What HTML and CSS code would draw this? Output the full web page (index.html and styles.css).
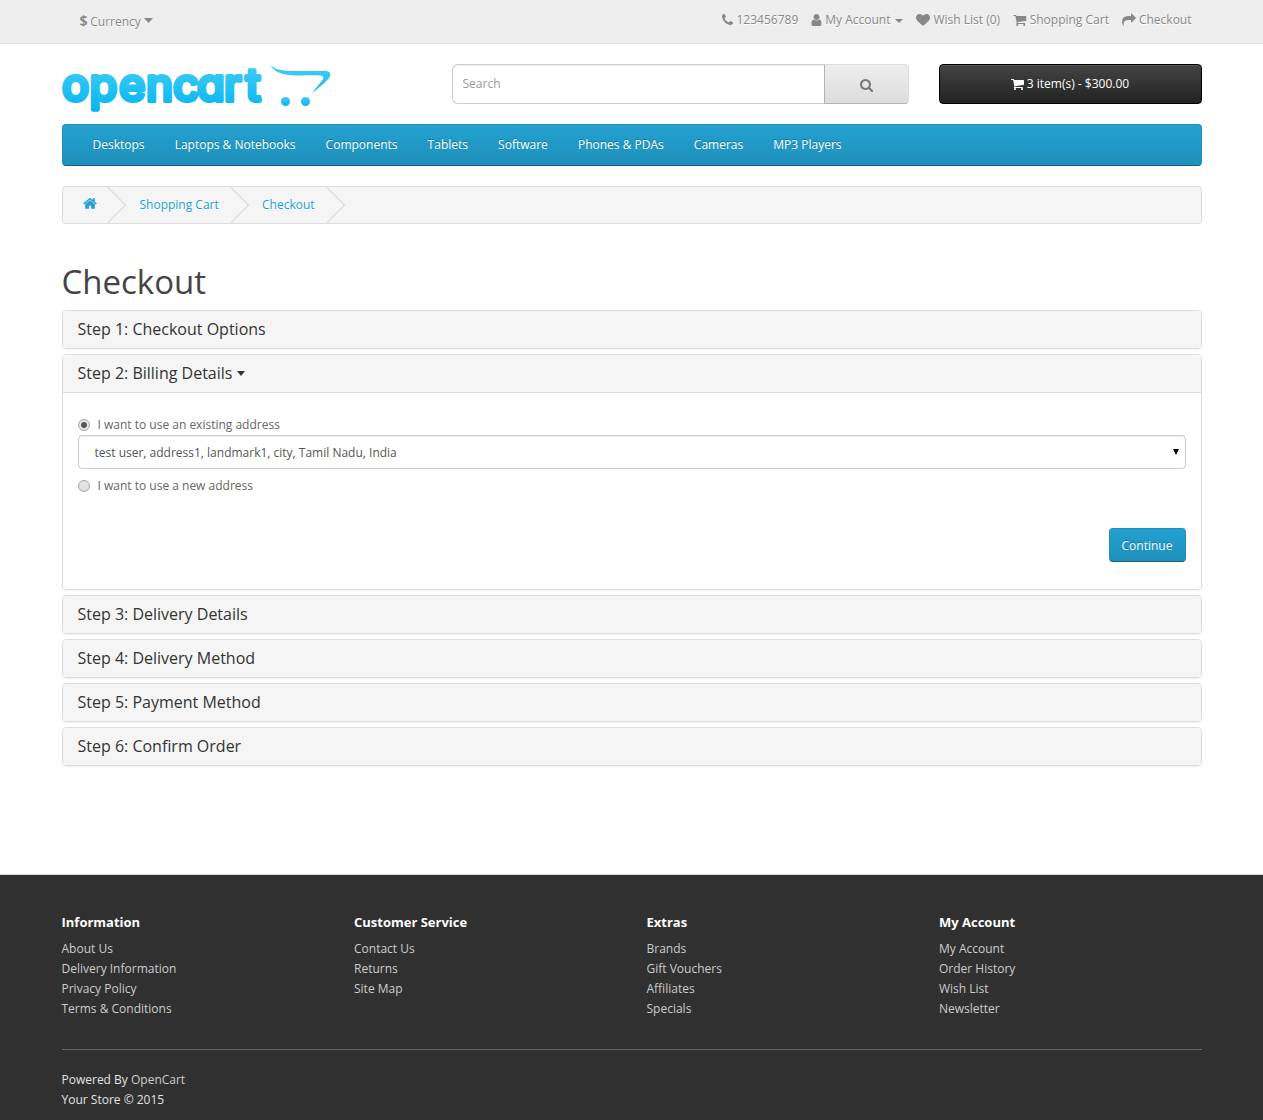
FILE: index.html
```html
<!DOCTYPE html>
<html lang="en">
<head>
<meta charset="utf-8">
<title>Checkout</title>
<link rel="stylesheet" href="styles.css">
</head>
<body>
<nav class="top">
  <div class="container top-row">
    <button class="currency"><strong>$</strong> <span>Currency</span><svg class="caret-lg" viewBox="0 0 9 5"><path d="M0 0h9L4.5 5z"/></svg></button>
    <ul class="top-links">
      <li><svg class="icon phone" viewBox="192 0 1408 1792"><path d="M1600 1240q0 27-10 70.5t-21 68.5q-21 50-122 106-94 51-186 51-27 0-53-3.5t-57.5-12.5-47-14.5-55.5-20.5-49-18q-98-35-175-83-127-79-264-216t-216-264q-48-77-83-175-3-9-18-49t-20.5-55.5-14.5-47-12.5-57.5-3.5-53q0-92 51-186 56-101 106-122 25-11 68.5-21t70.5-10q14 0 21 3 18 6 53 76 11 19 30 54t35 63.5 31 53.5q3 4 17.5 25t21.5 35.5 7 28.5q0 20-28.5 50t-62 55-62 53-28.5 46q0 9 5 22.5t8.5 20.5 14 24 11.5 19q76 137 174 235t235 174q2 1 19 11.5t24 14 20.5 8.5 22.5 5q18 0 46-28.5t53-62 55-62 50-28.5q14 0 28.5 7t35.5 21.5 25 17.5q25 15 53.5 31t63.5 35 54 30q70 35 76 53 3 7 3 21z"/></svg><span>123456789</span></li>
      <li class="account"><svg class="icon user" viewBox="256 0 1280 1792"><path d="M1536 1399q0 109-62.5 187t-150.5 78h-854q-88 0-150.5-78t-62.5-187q0-85 8.5-160.5t31.5-152 58.5-131 94-89 134.5-34.5q131 128 313 128t313-128q76 0 134.5 34.5t94 89 58.5 131 31.5 152 8.5 160.5zm-256-887q0 159-112.5 271.5t-271.5 112.5-271.5-112.5-112.5-271.5 112.5-271.5 271.5-112.5 271.5 112.5 112.5 271.5z"/></svg><span>My Account</span><svg class="caret" viewBox="0 0 8 4"><path d="M0 0h8L4 4z"/></svg></li>
      <li><svg class="icon heart" viewBox="0 0 1792 1792"><path d="M896 1664q-26 0-44-18l-624-602q-10-8-27.5-26t-55.5-65.5-68-97.5-53.5-121-23.5-138q0-220 127-344t351-124q62 0 126.5 21.5t120 58 95.5 68.5 76 68q36-36 76-68t95.5-68.5 120-58 126.5-21.5q224 0 351 124t127 344q0 221-229 450l-623 600q-18 18-44 18z"/></svg><span>Wish List (0)</span></li>
      <li><svg class="icon cart" viewBox="64 0 1664 1792"><path id="cart-shape" d="M704 1536q0 52-38 90t-90 38-90-38-38-90 38-90 90-38 90 38 38 90zm896 0q0 52-38 90t-90 38-90-38-38-90 38-90 90-38 90 38 38 90zm128-1088v512q0 24-16.5 42.5t-40.5 21.5l-1044 122q13 60 13 70 0 16-24 64h920q26 0 45 19t19 45-19 45-45 19h-1024q-26 0-45-19t-19-45q0-11 8-31.5t16-36 21.5-40 15.5-29.5l-177-823h-204q-26 0-45-19t-19-45 19-45 45-19h256q16 0 28.5 6.5t19.5 15.5 13 24.5 8 26 5.5 29.5 4.5 26h1201q26 0 45 19t19 45z"/></svg><span>Shopping Cart</span></li>
      <li><svg class="icon share" viewBox="0 0 1792 1792"><path d="M1792 640q0 26-19 45l-512 512q-19 19-45 19t-45-19-19-45v-256h-224q-98 0-175.5 6t-154 21.5-133 42.5-105.5 69.5-80 101-48.5 138.5-17.5 181q0 55 5 123 0 6 2.5 23.5t2.5 26.5q0 15-8.5 25t-23.5 10q-16 0-28-17-7-9-13-22t-13.5-30-10.5-24q-127-285-127-451 0-199 53-333 162-403 875-403h224v-256q0-26 19-45t45-19 45 19l512 512q19 19 19 45z"/></svg><span>Checkout</span></li>
    </ul>
  </div>
</nav>

<header class="container header">
  <svg class="logo" viewBox="0 0 270 50" role="img" aria-label="opencart">
    <defs>
      <linearGradient id="sky" gradientUnits="userSpaceOnUse" x1="0" y1="0" x2="0" y2="48">
        <stop offset="0" stop-color="#41cdf4"/><stop offset="1" stop-color="#04b5f0"/>
      </linearGradient>
      <linearGradient id="wheel" x1="0" y1="0" x2="0" y2="1">
        <stop offset="0" stop-color="#3fcbf4"/><stop offset="1" stop-color="#0cb7f0"/>
      </linearGradient>
    </defs>
    <text class="logo-text" y="36.800" x="0 27.5 57 84 111 135 162 183.500">opencart</text>
    <path fill="url(#sky)" d="M208.500 1C213 5.500 220 7 232 7.100L262 7C268 7 270 9.500 267 14C264.500 18 258 22.500 250.500 29C255 22 259.500 18 261 15C262 12.500 261 11.500 257 11.500C248 11 240 12 230 11.200C218 10.500 211.500 7 208.500 1Z"/>
    <circle cx="223.500" cy="37.500" r="4.500" fill="url(#wheel)"/><circle cx="243.500" cy="37.500" r="4.500" fill="url(#wheel)"/>
  </svg>
  <form class="search">
    <input type="text" placeholder="Search">
    <button type="button" aria-label="Search"><svg viewBox="64 128 1664 1664"><path d="M1216 832q0-185-131.5-316.5t-316.5-131.5-316.500 131.500-131.500 316.500 131.500 316.500 316.500 131.500 316.500-131.500 131.500-316.500zm512 832q0 52-38 90t-90 38q-54 0-90-38l-343-342q-179 124-399 124-143 0-273.500-55.500t-225-150-150-225-55.500-273.500 55.500-273.500 150-225 225-150 273.500-55.500 273.500 55.500 225 150 150 225 55.500 273.500q0 220-124 399l343 343q37 37 37 90z"/></svg></button>
  </form>
  <button class="cart-button"><svg class="icon cart" viewBox="64 0 1664 1792"><use href="#cart-shape"/></svg><span>3 item(s) - $300.00</span></button>
</header>

<div class="container">
  <nav class="menu">
    <a>Desktops</a><a>Laptops &amp; Notebooks</a><a>Components</a><a>Tablets</a><a>Software</a><a>Phones &amp; PDAs</a><a>Cameras</a><a>MP3 Players</a>
  </nav>

  <ul class="breadcrumb">
    <li class="crumb-home"><svg class="home" viewBox="64 0 1664 1792"><path d="M1472 992v480q0 26-19 45t-45 19h-384v-384h-256v384h-384q-26 0-45-19t-19-45v-480q0-1 .5-3t.5-3l575-474 575 474q1 2 1 6zm223-69l-62 74q-8 9-21 11h-3q-13 0-21-7l-692-577-692 577q-12 8-24 7-13-2-21-11l-62-74q-8-10-7-23.500t11-21.500l719-599q32-26 76-26t76 26l244 204v-195q0-14 9-23t23-9h192q14 0 23 9t9 23v408l219 182q10 8 11 21.500t-7 23.500z"/></svg></li>
    <li class="crumb-cart"><svg class="chevron" viewBox="0 0 20 36"><path d="M.5 0l18 18-18 18"/></svg><span>Shopping Cart</span></li>
    <li class="crumb-checkout"><svg class="chevron" viewBox="0 0 20 36"><path d="M.5 0l18 18-18 18"/></svg><span>Checkout</span></li>
    <li><svg class="chevron" viewBox="0 0 20 36"><path d="M.5 0l18 18-18 18"/></svg></li>
  </ul>

  <main>
    <h1>Checkout</h1>
    <div class="steps">
      <section class="panel"><h4>Step 1: Checkout Options</h4></section>
      <section class="panel">
        <h4>Step 2: Billing Details <svg class="title-caret" viewBox="0 0 8 5"><path d="M0 0h8L4 5z"/></svg></h4>
        <div class="panel-body">
          <label class="choice"><input type="radio" name="address" checked><span>I want to use an existing address</span></label>
          <div class="select">
            <select><option>test user, address1, landmark1, city, Tamil Nadu, India</option></select>
            <svg viewBox="0 0 6 6"><path d="M0 0h6L3 6z"/></svg>
          </div>
          <label class="choice"><input type="radio" name="address"><span>I want to use a new address</span></label>
          <div class="actions"><button class="primary">Continue</button></div>
        </div>
      </section>
      <section class="panel"><h4>Step 3: Delivery Details</h4></section>
      <section class="panel"><h4>Step 4: Delivery Method</h4></section>
      <section class="panel"><h4>Step 5: Payment Method</h4></section>
      <section class="panel"><h4>Step 6: Confirm Order</h4></section>
    </div>
  </main>
</div>

<footer>
  <div class="container">
    <div class="footer-columns">
      <div><h5>Information</h5><a>About Us</a><a>Delivery Information</a><a>Privacy Policy</a><a>Terms &amp; Conditions</a></div>
      <div><h5>Customer Service</h5><a>Contact Us</a><a>Returns</a><a>Site Map</a></div>
      <div><h5>Extras</h5><a>Brands</a><a>Gift Vouchers</a><a>Affiliates</a><a>Specials</a></div>
      <div><h5>My Account</h5><a>My Account</a><a>Order History</a><a>Wish List</a><a>Newsletter</a></div>
    </div>
    <hr>
    <p>Powered By <span class="credit">OpenCart</span><br>Your Store © 2015</p>
  </div>
</footer>
</body>
</html>
```

FILE: styles.css
```css
* { box-sizing: border-box; }
body {
  margin: 0;
  font: 12px/20px "Open Sans", sans-serif;
  color: #666;
  background: #fff;
}
ul { list-style: none; margin: 0; padding: 0; }
svg { display: block; flex: none; }
button, input, select { font: inherit; }
.container { width: 1140px; margin: 0 auto; }

.top {
  height: 44px;
  background: #eee;
  border-bottom: 1px solid #e2e2e2;
  color: #888;
  text-shadow: 0 1px 0 #fff;
}
.top svg { fill: #888; }
.top-row { display: flex; justify-content: space-between; padding: 0 10px 0 18px; }
.currency {
  display: flex;
  height: 20px;
  margin-top: 12px;
  padding: 0;
  border: 0;
  background: none;
  color: inherit;
  text-shadow: inherit;
}
.currency strong { font-size: 14px; line-height: 17px; margin-right: 2px; }
.currency span { width: 52px; white-space: nowrap; }
.caret-lg { width: 9px; height: 5px; margin: 6px 0 0 2px; }
.top-links { display: flex; margin-top: 10px; gap: 13px; }
.top-links li { display: flex; align-items: center; height: 20px; gap: 3px; white-space: nowrap; }
.icon { height: 14px; margin-top: -1px; fill: currentColor; }
.phone { width: 11px; }
.user { width: 11px; }
.heart, .share { width: 14px; }
.cart { width: 13px; }
.top-links .cart { width: 13.5px; }
.caret { width: 8px; height: 4px; margin: 2px 0 0 2px; }

.header { display: flex; height: 80px; padding-top: 20px; }
.logo { width: 270px; height: 50px; margin-right: 120px; overflow: visible; }
.logo-text {
  font: 500 45px Inter, sans-serif;
  font-feature-settings: "cv11";
  fill: url(#sky);
  stroke: url(#sky);
  stroke-width: 4px;
  stroke-linejoin: round;
}
.search { display: flex; width: 457px; height: 40px; }
.search input {
  width: 372px;
  padding: 0 10px;
  border: 1px solid #ccc;
  border-right: 0;
  border-radius: 6px 0 0 6px;
  box-shadow: inset 0 1px 1px rgba(0, 0, 0, .075);
  outline: 0;
  color: #555;
}
.search input::placeholder { color: #999; opacity: 1; }
.search button {
  display: flex;
  align-items: center;
  justify-content: center;
  width: 85px;
  padding: 3px 0 0;
  border: 1px solid #ccc;
  border-color: #ddd #ddd #b3b3b3 #b3b3b3;
  border-radius: 0 4px 4px 0;
  background: linear-gradient(#eee, #ddd);
}
.search svg { width: 13px; height: 13px; fill: #777; }
.cart-button {
  display: flex;
  align-items: center;
  justify-content: center;
  gap: 3px;
  width: 263px;
  height: 40px;
  margin-left: 30px;
  border: 1px solid #000;
  border-radius: 4px;
  background: linear-gradient(#444, #222);
  box-shadow: inset 0 1px 0 #555;
  color: #fff;
}

.menu {
  display: flex;
  height: 42px;
  padding: 10px 15px;
  border: 1px solid #1f90bb;
  border-bottom-color: #145e7a;
  border-radius: 4px;
  background: linear-gradient(#23a1d1, #1f90bb);
  color: #fff;
  text-shadow: 0 -1px 0 rgba(0, 0, 0, .25);
}
.menu a { padding: 0 15px; margin-right: .1px; white-space: nowrap; }

.breadcrumb {
  display: flex;
  height: 38px;
  margin: 20px 0 0;
  border: 1px solid #ddd;
  border-radius: 4px;
  background: #f5f5f5;
  color: #23a1d1;
  text-shadow: 0 1px 0 #fff;
  line-height: 36px;
}
.breadcrumb li { display: flex; }
.crumb-home { width: 44px; padding-left: 20px; }
.home { width: 14px; height: 15px; margin-top: 9px; fill: #23a1d1; }
.crumb-cart { width: 123px; gap: 13px; }
.crumb-checkout { width: 96px; gap: 12.500px; }
.chevron { width: 20px; height: 36px; fill: none; stroke: #ddd; stroke-width: 1.300; }

h1 { margin: 40px 0 10px; font-size: 33px; line-height: 36px; font-weight: 400; color: #444; }
.steps { display: flex; flex-direction: column; gap: 5px; }
.panel { border: 1px solid #ddd; border-radius: 4px; box-shadow: 0 1px 1px rgba(0, 0, 0, .05); }
.panel h4 {
  display: flex;
  align-items: center;
  height: 37px;
  margin: 0;
  padding: 0 15px 2px;
  border-radius: 3px;
  background: #f5f5f5;
  color: #333;
  font-size: 16px;
  font-weight: 400;
}
.title-caret { width: 8px; height: 5px; margin: 2px 0 0 5px; fill: #333; }
.panel-body { height: 197px; border-top: 1px solid #ddd; padding: 22px 15px 0; }
.choice { display: flex; align-items: center; height: 20px; gap: 8px; }
.choice input {
  appearance: none;
  display: flex;
  width: 12px;
  height: 12px;
  margin: 0;
  border: 1px solid #a4a4a4;
  border-radius: 50%;
  background: linear-gradient(#e9e9e9, #ddd);
}
.choice input:checked { background: radial-gradient(circle, #555 0 2.500px, #e6e6e6 3.500px); }
.select {
  display: flex;
  align-items: center;
  height: 34px;
  margin-bottom: 7px;
  padding-right: 6px;
  border: 1px solid #ccc;
  border-radius: 4px;
  box-shadow: inset 0 1px 1px rgba(0, 0, 0, .075);
}
.select select { appearance: none; flex: 1; padding: 2px 16px 0; border: 0; background: none; color: #555; outline: 0; }
.select svg { width: 6px; height: 6px; fill: #000; }
.actions { display: flex; justify-content: flex-end; margin-top: 32px; }
.primary {
  width: 77px;
  height: 34px;
  padding: 2px 0 0;
  border: 1px solid #1f90bb;
  border-bottom-color: #145e7a;
  border-radius: 4px;
  background: linear-gradient(#23a1d1, #1f90bb);
  color: #fff;
  text-shadow: 0 -1px 0 rgba(0, 0, 0, .25);
}

footer {
  height: 246px;
  margin-top: 108px;
  padding-top: 37px;
  border-top: 1px solid #ddd;
  background: #303030;
  color: #e2e2e2;
}
.footer-columns { display: grid; grid-template-columns: repeat(4, 292.500px); height: 137px; }
.footer-columns div { display: flex; flex-direction: column; }
h5 { margin: 0 0 7px; font-size: 13px; font-weight: 700; line-height: 20px; color: #fff; }
footer a, .credit { color: #ccc; }
hr { height: 1px; margin: 0 0 20px; border: 0; background: #666; }
footer p { margin: 0; }
```
